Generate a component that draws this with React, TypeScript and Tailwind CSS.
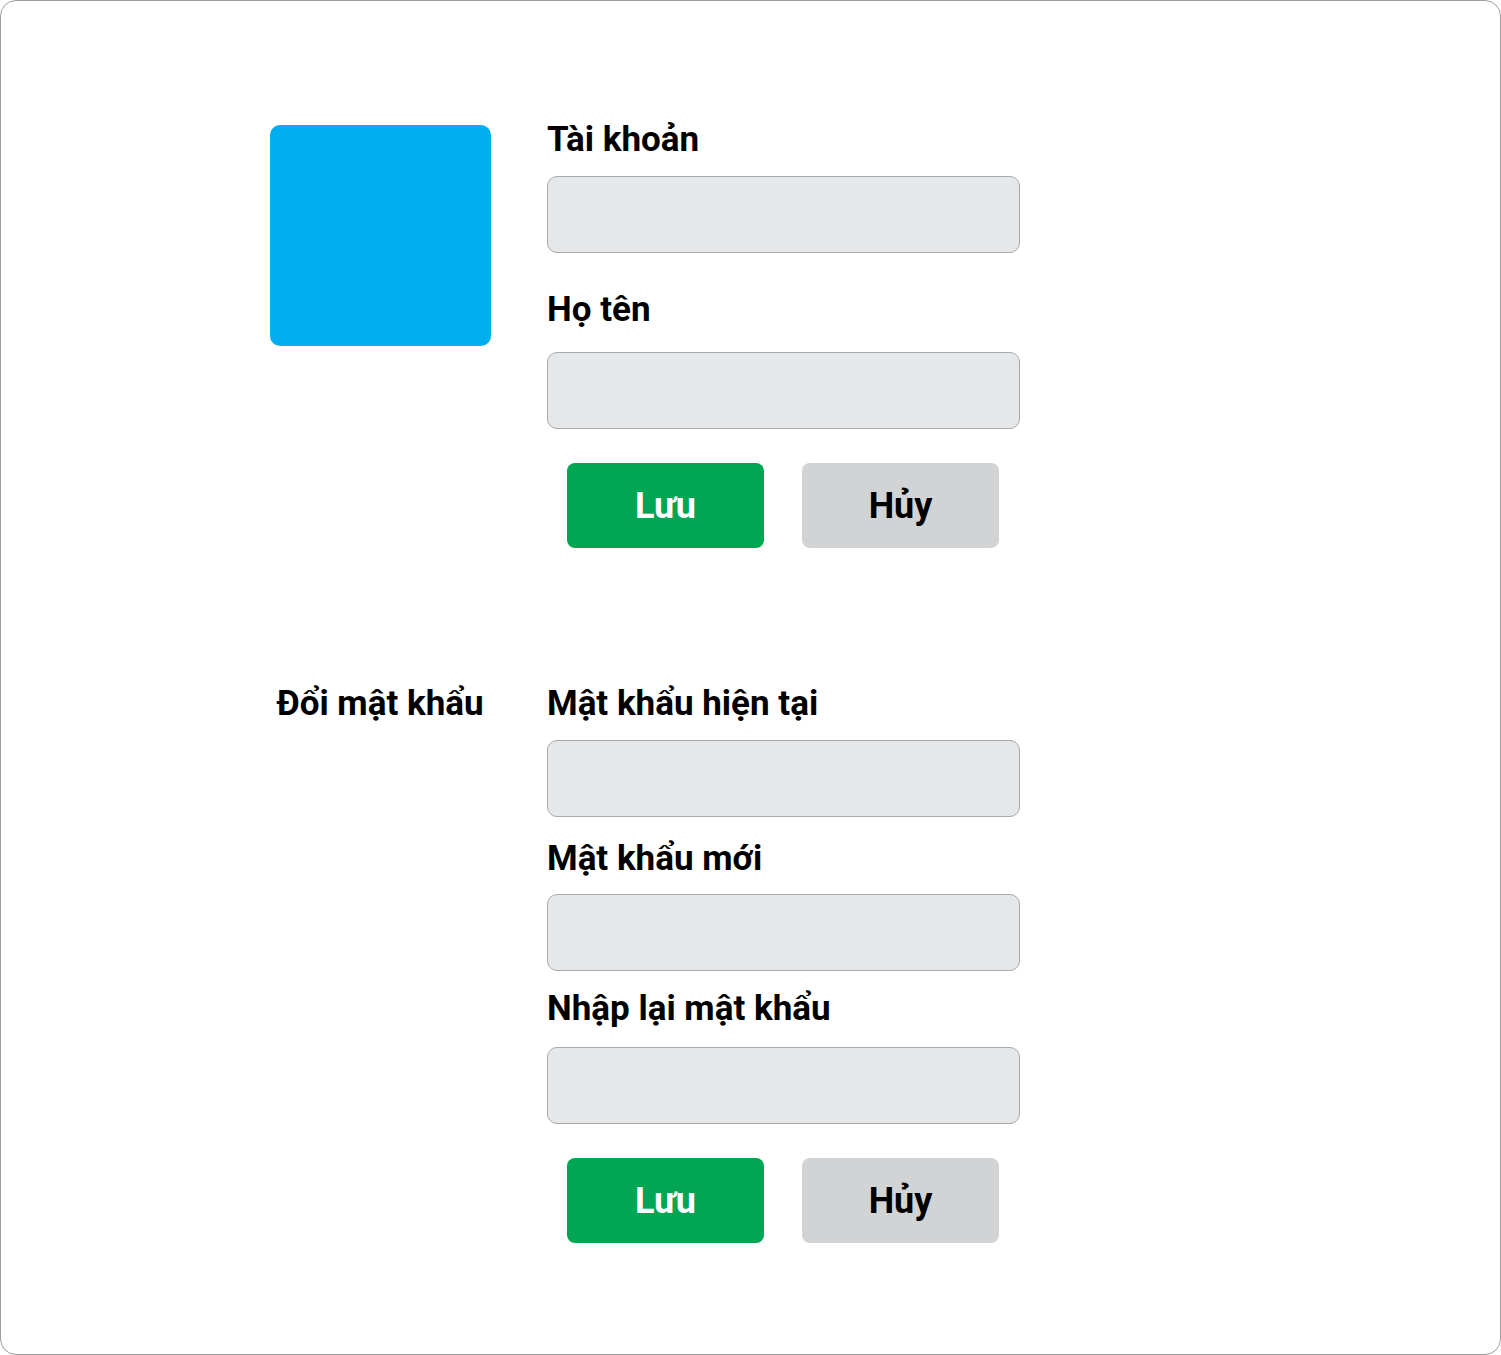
import React from "react";

const font = { fontFamily: "Roboto, 'Noto Sans', Arial, sans-serif" };

function Label({ children, className = "" }: { children: React.ReactNode; className?: string }) {
  return (
    <div className={`text-[35px] leading-[38px] font-bold text-black ${className}`}>{children}</div>
  );
}

function Field({ className = "" }: { className?: string }) {
  return (
    <div
      className={`h-[77px] w-[473px] rounded-[10px] border border-[#a7a9ac] bg-[#e6e7e9] ${className}`}
    />
  );
}

function Buttons({ className = "" }: { className?: string }) {
  return (
    <div className={`flex gap-[38px] pl-[20px] ${className}`}>
      <button className="flex h-[85px] w-[197px] items-center justify-center rounded-[8px] bg-[#00a651] text-[36px] font-bold text-white">
        Lưu
      </button>
      <button className="flex h-[85px] w-[197px] items-center justify-center rounded-[8px] bg-[#d1d3d4] text-[36px] font-bold text-black">
        Hủy
      </button>
    </div>
  );
}

export default function App() {
  return (
    <div className="h-[1355px] w-[1501px] bg-white" style={font}>
      <div className="h-full w-full rounded-[16px] border border-[#9d9d9d] pl-[269px] pt-[120px]">
        <div className="flex gap-[57px]">
          <div className="w-[220px] shrink-0 pt-[4px]">
            <div className="h-[221px] w-[221px] rounded-[10px] bg-[#00aeef]" />
          </div>
          <div className="flex flex-col">
            <Label>Tài khoản</Label>
            <Field className="mt-[17px]" />
            <Label className="mt-[38px]">Họ tên</Label>
            <Field className="mt-[23px]" />
            <Buttons className="mt-[34px]" />
          </div>
        </div>
        <div className="mt-[137px] flex gap-[57px]">
          <div className="w-[220px] shrink-0 text-center">
            <Label>Đổi mật khẩu</Label>
          </div>
          <div className="flex flex-col">
            <Label>Mật khẩu hiện tại</Label>
            <Field className="mt-[17px]" />
            <Label className="mt-[23px]">Mật khẩu mới</Label>
            <Field className="mt-[16px]" />
            <Label className="mt-[19px]">Nhập lại mật khẩu</Label>
            <Field className="mt-[19px]" />
            <Buttons className="mt-[34px]" />
          </div>
        </div>
      </div>
    </div>
  );
}
